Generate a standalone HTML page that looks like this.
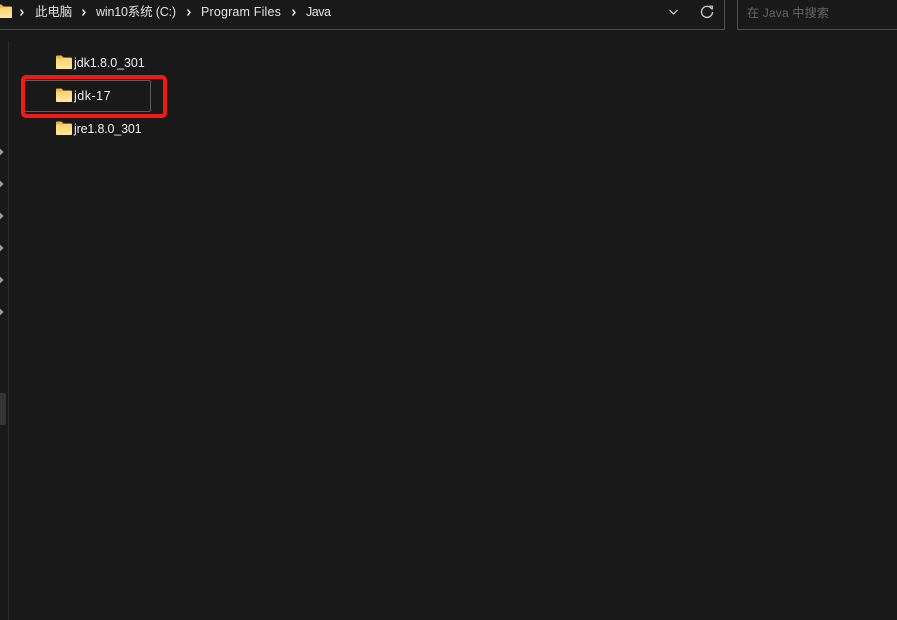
<!DOCTYPE html>
<html>
<head>
<meta charset="utf-8">
<style>
html,body{margin:0;padding:0;width:897px;height:620px;overflow:hidden;background:#191919;}
body{position:relative;font-family:"Liberation Sans","Noto Sans CJK SC",sans-serif;color:#fff;}
.a{position:absolute;}
.t{position:absolute;white-space:nowrap;font-size:12.5px;line-height:16px;color:#e2e2e2;}
.f{position:absolute;white-space:nowrap;font-size:12.5px;line-height:16px;color:#efefef;left:74px;}
svg{position:absolute;display:block;}
</style>
</head>
<body>
<svg width="0" height="0" style="left:0;top:0">
<defs><linearGradient id="g" x1="0" y1="0" x2="0" y2="1"><stop offset="0" stop-color="#fcd26c"/><stop offset="1" stop-color="#ffe8a0"/></linearGradient></defs>
</svg>
<!-- address bar borders -->
<div class="a" style="left:0;top:29px;width:725px;height:1px;background:#4e4e4e;"></div>
<div class="a" style="left:724px;top:0;width:1px;height:30px;background:#4e4e4e;"></div>
<div class="a" style="left:737px;top:0;width:1px;height:30px;background:#4e4e4e;"></div>
<div class="a" style="left:737px;top:29px;width:160px;height:1px;background:#4e4e4e;"></div>

<!-- top folder -->
<svg style="left:-4px;top:4px" width="16" height="14" viewBox="0 0 16 14">
<path d="M0 1.500Q0 .5 1 .5H5.500L7.500 2.500H15Q16 2.500 16 3.500V13Q16 14 15 14H1Q0 14 0 13Z" fill="#eeb33a"/>
<path d="M0 3.500H6L8 3H15Q16 3 16 4V13Q16 14 15 14H1Q0 14 0 13Z" fill="url(#g)"/>
</svg>

<!-- breadcrumb -->
<svg style="left:19px;top:8px" width="6" height="9" viewBox="0 0 6 9"><path d="M1.500 1.500L4 4.500L1.500 7.500" fill="none" stroke="#e8e8e8" stroke-width="1.400"/></svg>
<div class="t" style="left:35px;top:4px;letter-spacing:-.1px;">此电脑</div>
<svg style="left:81px;top:8px" width="6" height="9" viewBox="0 0 6 9"><path d="M1.500 1.500L4 4.500L1.500 7.500" fill="none" stroke="#e8e8e8" stroke-width="1.400"/></svg>
<div class="t" style="left:96px;top:4px;letter-spacing:-.17px;">win10系统 (C:)</div>
<svg style="left:185.500px;top:8px" width="6" height="9" viewBox="0 0 6 9"><path d="M1.500 1.500L4 4.500L1.500 7.500" fill="none" stroke="#e8e8e8" stroke-width="1.400"/></svg>
<div class="t" style="left:201px;top:4px;letter-spacing:.17px;">Program Files</div>
<svg style="left:290.500px;top:8px" width="6" height="9" viewBox="0 0 6 9"><path d="M1.500 1.500L4 4.500L1.500 7.500" fill="none" stroke="#e8e8e8" stroke-width="1.400"/></svg>
<div class="t" style="left:306px;top:4px;letter-spacing:-.5px;">Java</div>

<!-- dropdown chevron -->
<svg style="left:668px;top:8px" width="11" height="8" viewBox="0 0 11 8"><path d="M1.500 2L5.500 6L9.500 2" fill="none" stroke="#dcdcdc" stroke-width="1.100"/></svg>
<!-- refresh -->
<svg style="left:700px;top:5px" width="14" height="14" viewBox="0 0 14 14"><path d="M11.800 4.200A5.500 5.500 0 1 0 12.500 7" fill="none" stroke="#cfcfcf" stroke-width="1.300"/><path d="M9 1.200L12.300 1.200L12.300 4.500" fill="none" stroke="#cfcfcf" stroke-width="1.200"/></svg>

<!-- search -->
<div class="t" style="left:747px;top:5px;color:#666;font-size:12px;letter-spacing:.2px;">在 Java 中搜索</div>

<!-- nav pane -->
<div class="a" style="left:8px;top:41px;width:1px;height:579px;background:#2c2c2c;"></div>
<div class="a" style="left:0;top:393px;width:6px;height:32px;background:#333;border-radius:0 2px 2px 0;"></div>
<svg style="left:0;top:147.500px" width="4" height="170" viewBox="0 0 4 170" fill="#9a9a9a">
<path d="M0 .5L3.500 4L0 7.500Z"/><path d="M0 32.500L3.500 36L0 39.500Z"/><path d="M0 64.500L3.500 68L0 71.500Z"/><path d="M0 96.500L3.500 100L0 103.500Z"/><path d="M0 128.500L3.500 132L0 135.500Z"/><path d="M0 160.500L3.500 164L0 167.500Z"/>
</svg>

<!-- selected row -->
<div class="a" style="left:24px;top:80px;width:125px;height:30px;border:1px solid #5c5c5c;border-radius:2px;"></div>
<!-- red annotation -->
<div class="a" style="left:21px;top:75px;width:138px;height:35px;border:4px solid #f01c14;border-radius:5px;"></div>

<!-- folders -->
<svg style="left:56px;top:55px" width="16" height="14" viewBox="0 0 16 14">
<path d="M0 1.500Q0 .5 1 .5H5.500L7.500 2.500H15Q16 2.500 16 3.500V13Q16 14 15 14H1Q0 14 0 13Z" fill="#eeb33a"/>
<path d="M0 3.500H6L8 3H15Q16 3 16 4V13Q16 14 15 14H1Q0 14 0 13Z" fill="url(#g)"/>
</svg>
<div class="f" style="top:55px;letter-spacing:-.08px;">jdk1.8.0_301</div>

<svg style="left:56px;top:88px" width="16" height="14" viewBox="0 0 16 14">
<path d="M0 1.500Q0 .5 1 .5H5.500L7.500 2.500H15Q16 2.500 16 3.500V13Q16 14 15 14H1Q0 14 0 13Z" fill="#eeb33a"/>
<path d="M0 3.500H6L8 3H15Q16 3 16 4V13Q16 14 15 14H1Q0 14 0 13Z" fill="url(#g)"/>
</svg>
<div class="f" style="top:88px;letter-spacing:.5px;">jdk-17</div>

<svg style="left:56px;top:121px" width="16" height="14" viewBox="0 0 16 14">
<path d="M0 1.500Q0 .5 1 .5H5.500L7.500 2.500H15Q16 2.500 16 3.500V13Q16 14 15 14H1Q0 14 0 13Z" fill="#eeb33a"/>
<path d="M0 3.500H6L8 3H15Q16 3 16 4V13Q16 14 15 14H1Q0 14 0 13Z" fill="url(#g)"/>
</svg>
<div class="f" style="top:121px;letter-spacing:-.17px;">jre1.8.0_301</div>
</body>
</html>
